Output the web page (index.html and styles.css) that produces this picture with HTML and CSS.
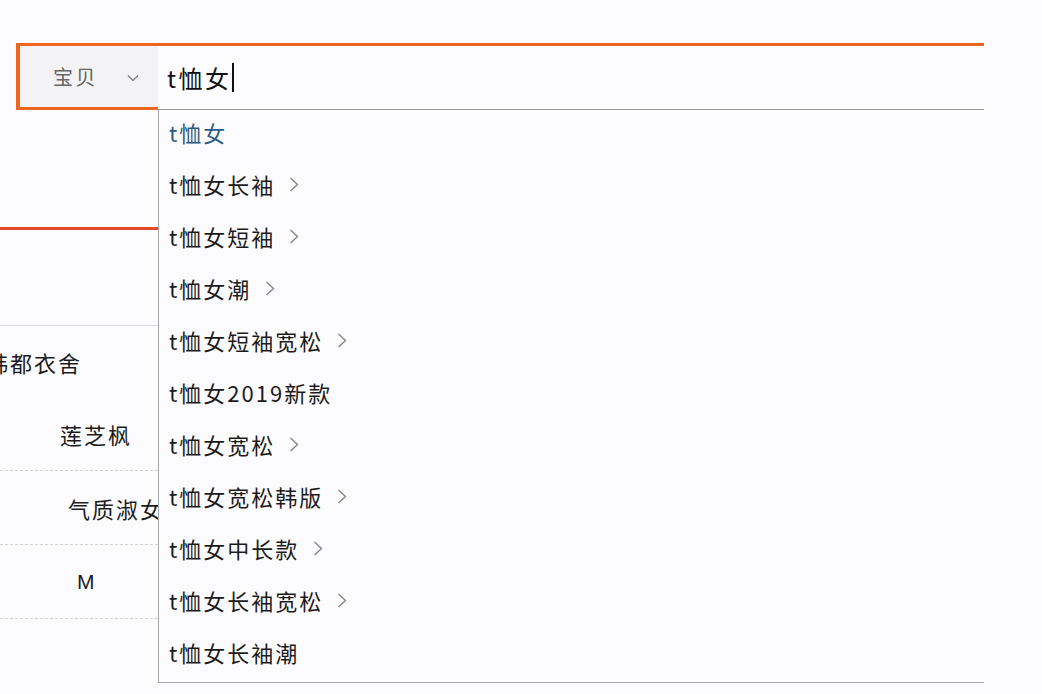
FILE: index.html
```html
<!DOCTYPE html>
<html lang="zh-CN">
<head>
<meta charset="utf-8">
<title>搜索</title>
<link rel="stylesheet" href="styles.css">
</head>
<body>
<div class="page">
  <div class="search">
    <div class="select">
      <span class="select-label">宝贝</span>
      <svg class="select-arrow" width="12" height="8" viewBox="0 0 12 8"><path d="M1 1.5 L6 6.5 L11 1.5" fill="none" stroke="#777" stroke-width="1.2"/></svg>
    </div>
    <div class="input"><span class="query">t恤女</span><span class="caret"></span></div>
  </div>
  <div class="lower">
    <div class="behind">
      <div class="spacer-a"></div>
      <div class="rule-orange"></div>
      <div class="spacer-b"></div>
      <div class="rule-gray"></div>
      <div class="cell cell-shop"><span class="shop">韩都衣舍</span></div>
      <div class="cell cell-dashed cell-brand">莲芝枫</div>
      <div class="cell cell-dashed cell-style">气质淑女</div>
      <div class="cell cell-dashed cell-size">M</div>
    </div>
    <ul class="suggest">
      <li class="item item-current">t恤女</li>
      <li class="item">t恤女长袖<svg class="more" width="10" height="15" viewBox="0 0 10 15"><path d="M1.5 1 L8.5 7.5 L1.5 14" fill="none" stroke="#8a8a8a" stroke-width="1.5"/></svg></li>
      <li class="item">t恤女短袖<svg class="more" width="10" height="15" viewBox="0 0 10 15"><path d="M1.5 1 L8.5 7.5 L1.5 14" fill="none" stroke="#8a8a8a" stroke-width="1.5"/></svg></li>
      <li class="item">t恤女潮<svg class="more" width="10" height="15" viewBox="0 0 10 15"><path d="M1.5 1 L8.5 7.5 L1.5 14" fill="none" stroke="#8a8a8a" stroke-width="1.5"/></svg></li>
      <li class="item">t恤女短袖宽松<svg class="more" width="10" height="15" viewBox="0 0 10 15"><path d="M1.5 1 L8.5 7.5 L1.5 14" fill="none" stroke="#8a8a8a" stroke-width="1.5"/></svg></li>
      <li class="item">t恤女2019新款</li>
      <li class="item">t恤女宽松<svg class="more" width="10" height="15" viewBox="0 0 10 15"><path d="M1.5 1 L8.5 7.5 L1.5 14" fill="none" stroke="#8a8a8a" stroke-width="1.5"/></svg></li>
      <li class="item">t恤女宽松韩版<svg class="more" width="10" height="15" viewBox="0 0 10 15"><path d="M1.5 1 L8.5 7.5 L1.5 14" fill="none" stroke="#8a8a8a" stroke-width="1.5"/></svg></li>
      <li class="item">t恤女中长款<svg class="more" width="10" height="15" viewBox="0 0 10 15"><path d="M1.5 1 L8.5 7.5 L1.5 14" fill="none" stroke="#8a8a8a" stroke-width="1.5"/></svg></li>
      <li class="item">t恤女长袖宽松<svg class="more" width="10" height="15" viewBox="0 0 10 15"><path d="M1.5 1 L8.5 7.5 L1.5 14" fill="none" stroke="#8a8a8a" stroke-width="1.5"/></svg></li>
      <li class="item">t恤女长袖潮</li>
    </ul>
  </div>
</div>
</body>
</html>
```

FILE: styles.css
```css
* { box-sizing: border-box; }
html, body {
  margin: 0;
  padding: 0;
  background: #fcfcfe;
}
body {
  font-family: "Noto Sans CJK SC", "Noto Sans", sans-serif;
  color: #1c1c1c;
}
.page {
  width: 1042px;
  height: 694px;
  overflow: hidden;
  padding-top: 43px;
}
.search {
  display: flex;
  margin-left: 16px;
  width: 968px;
  border-top: 3px solid #ec6620;
  border-left: 4px solid #ec6620;
}
.select {
  width: 138px;
  height: 64px;
  background: #f3f3f5;
  border-bottom: 3px solid #ec6620;
  display: flex;
  align-items: center;
  padding-left: 33px;
}
.select-label {
  font-size: 20px;
  letter-spacing: 2.5px;
  color: #666;
}
.select-arrow {
  margin-left: 29px;
  margin-top: 2px;
}
.input {
  flex: 1;
  height: 64px;
  background: #fdfdff;
  border-bottom: 1px solid #9a9a9a;
  display: flex;
  align-items: center;
  padding-left: 9px;
}
.query {
  font-size: 24px;
  letter-spacing: 2.5px;
  color: #111;
}
.caret {
  display: inline-block;
  width: 2px;
  height: 29px;
  background: #111;
}
.lower {
  display: flex;
}
.behind {
  width: 158px;
  flex: none;
  overflow: hidden;
}
.spacer-a { height: 117px; }
.rule-orange {
  height: 3px;
  background: #e24a2c;
}
.spacer-b { height: 95px; }
.rule-gray {
  height: 1px;
  background: #dedee2;
}
.cell {
  height: 74px;
  display: flex;
  align-items: center;
  font-size: 22px;
  letter-spacing: 2px;
  white-space: nowrap;
}
.cell-shop { height: 71px; }
.shop { margin-left: -14px; }
.cell-dashed { border-bottom: 1px dashed #d4d4d8; }
.cell-brand { padding-left: 60px; }
.cell-style { padding-left: 68px; }
.cell-size {
  padding-left: 77px;
  font-family: "Liberation Sans", "Noto Sans", sans-serif;
  font-size: 21px;
}
.suggest {
  list-style: none;
  margin: 0;
  padding: 0;
  width: 826px;
  height: 573px;
  border-left: 1px solid #a8a8ac;
  border-bottom: 1px solid #a8a8ac;
  background: #fcfcfe;
}
.item {
  height: 52px;
  line-height: 44px;
  padding-bottom: 8px;
  padding-left: 10px;
  font-size: 22px;
  letter-spacing: 2px;
  color: #1c1c1c;
  display: flex;
  align-items: center;
}
.item-current { color: #2d5b86; }
.more {
  margin-left: 14px;
}
```
